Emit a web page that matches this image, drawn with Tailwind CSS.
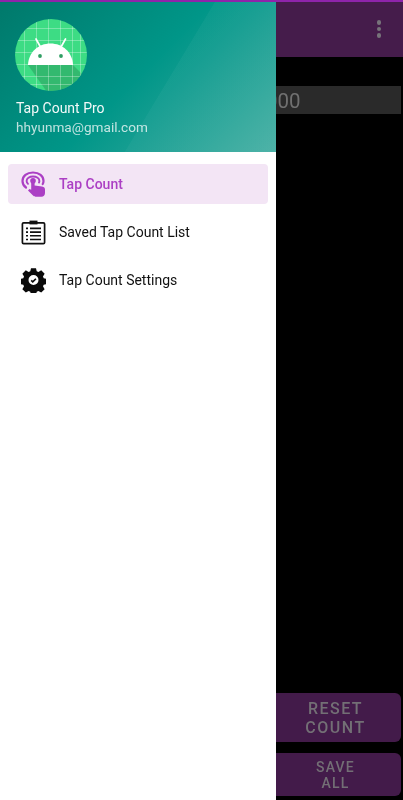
<!DOCTYPE html>
<html>
<head>
<meta charset="utf-8">
<script src="https://cdn.jsdelivr.net/npm/@tailwindcss/browser@4"></script>
</head>
<body class="m-0 bg-black">
<div class="relative w-[403px] h-[800px] overflow-hidden bg-black font-['Roboto',sans-serif] blur-[0.4px]">
  <!-- underlying screen -->
  <div class="flex flex-col h-full">
    <div class="h-[2px] bg-[#8e24aa] shrink-0"></div>
    <div class="h-[55px] shrink-0 bg-[#451c4b] flex items-center justify-end pr-[22px]">
      <div class="flex flex-col gap-[2px] mt-[-1px]">
        <span class="w-[4.5px] h-[4.5px] rounded-full bg-[#77737a]"></span>
        <span class="w-[4.5px] h-[4.5px] rounded-full bg-[#77737a]"></span>
        <span class="w-[4.5px] h-[4.5px] rounded-full bg-[#77737a]"></span>
      </div>
    </div>
    <div class="mt-[29px] ml-[266px] mr-[2px] h-[28px] pt-[2px] bg-[#2a2a2a] flex items-center justify-start shrink-0">
      <span class="text-[20.5px] leading-none text-[#707070]">000</span>
    </div>
    <div class="mt-auto mr-[2px] ml-[270px] flex flex-col gap-[11px] pb-[4px]">
      <div class="h-[49px] pt-[1px] rounded-[6px] bg-[#431b4a] flex items-center justify-center text-center text-[#736f75] text-[16px] leading-[19px] font-medium tracking-[1.5px]">RESET<br>COUNT</div>
      <div class="h-[43px] rounded-[6px] bg-[#431b4a] flex items-center justify-center text-center text-[#736f75] text-[14px] leading-[16px] font-medium tracking-[1.2px]">SAVE<br>ALL</div>
    </div>
  </div>

  <!-- navigation drawer -->
  <aside class="absolute left-0 top-0 bottom-0 w-[276px] bg-white flex flex-col">
    <div class="h-[2px] bg-[#8e24aa] shrink-0"></div>
    <header class="relative h-[150px] shrink-0 bg-[linear-gradient(135deg,#00796b_0%,#009688_50%,#48b0a5_100%)] px-[16px] overflow-hidden">
      <div class="absolute inset-0 bg-[linear-gradient(121deg,transparent_0%,transparent_58.6%,rgba(255,255,255,0.035)_58.8%,rgba(255,255,255,0.035)_100%)]"></div>
      <div class="relative">
        <svg class="mt-[17px] ml-[-1px] block" width="72" height="72" viewBox="0 0 72 72">
          <defs>
            <clipPath id="c"><circle cx="36" cy="36" r="36"/></clipPath>
          </defs>
          <circle cx="36" cy="36" r="36" fill="#3ddc84"/>
          <g clip-path="url(#c)">
            <path d="M13 46 H58 L88 76 V90 H44 Z" fill="#2c9c5e" fill-opacity="0.55"/>
            <g stroke="#ffffff" stroke-opacity="0.3" stroke-width="1">
              <path d="M9.5 0V72M21.5 0V72M33.5 0V72M45.5 0V72M57.5 0V72M65.5 0V72"/>
              <path d="M0 9.5H72M0 21.5H72M0 33.5H72M0 45.5H72M0 57.5H72M0 65.5H72"/>
            </g>
          </g>
          <path d="M13 46 C13.5 33 23.5 24.5 35.5 24.5 C47.5 24.5 57.5 33 58 46 Z" fill="#ffffff"/>
          <path d="M25.5 28 L21 20 M46 28 L50.5 20" stroke="#ffffff" stroke-width="1.7" stroke-linecap="round"/>
          <circle cx="25" cy="37" r="1.9" fill="#2f9e63"/>
          <circle cx="46" cy="37" r="1.9" fill="#2f9e63"/>
        </svg>
        <p class="mt-[7px] text-[14px] leading-[20px] text-white/95">Tap Count Pro</p>
        <p class="mt-[-1px] text-[13.6px] leading-[20px] text-white/75">hhyunma@gmail.com</p>
      </div>
    </header>
    <nav class="px-[8px] pt-[12px] flex flex-col gap-[8px]">
      <a class="h-[40px] rounded-[4px] bg-[#f3e5f5] flex items-center pl-[13px] gap-[13px] text-[14px] font-medium text-[#ab3fc4]">
        <svg width="25" height="26" viewBox="0 0 25 26" fill="none">
          <path d="M5 16.5 C2.6 14.8 1.5 12.6 1.5 10 C1.5 5 5.8 1.5 12 1.5 C18.2 1.5 22.5 5 22.5 10 C22.5 11.2 22.2 12.2 21.7 13" stroke="#ab3fc4" stroke-width="2.2" stroke-linecap="round"/>
          <path d="M7 12.8 C6 11.8 5.6 10.9 5.6 10 C5.6 7.4 8.4 5.5 12 5.5 C15.6 5.5 18.4 7.4 18.4 10 C18.4 10.6 18.3 11 18 11.5" stroke="#ab3fc4" stroke-width="1.9" stroke-linecap="round"/>
          <circle cx="12" cy="9.8" r="2.8" fill="#ab3fc4"/>
          <path d="M10.2 9.8 H13.6 V14.4 L21 15.4 C23.2 15.8 24 16.8 24 18.6 V22 C24 24.4 22.6 25.8 20.4 25.8 H14.6 C13.4 25.8 12.8 25.4 12 24.6 L7 19.4 L8.4 18 L10.2 18.8 Z" fill="#ab3fc4"/>
        </svg>
        <span>Tap Count</span>
      </a>
      <a class="h-[40px] flex items-center pl-[13px] gap-[13px] text-[14px] text-[#111]">
        <svg width="25" height="26" viewBox="0 0 25 26" fill="none">
          <rect x="1.4" y="3.8" width="22.2" height="20.8" rx="1.2" stroke="#111" stroke-width="1.7"/>
          <path d="M8.5 1.6 H16.5 V5.4 H8.5 Z" fill="#111"/>
          <path d="M5 9.4h2M9 9.4h11M5 13.1h2M9 13.1h11M5 16.8h2M9 16.8h11M5 20.5h2M9 20.5h11" stroke="#111" stroke-width="1.6"/>
        </svg>
        <span>Saved Tap Count List</span>
      </a>
      <a class="h-[40px] flex items-center pl-[13px] gap-[13px] text-[14px] text-[#111]">
        <svg width="25" height="26" viewBox="0 0 24 24">
          <path fill="#0a0a0a" fill-rule="evenodd" d="M9.6 0.6h4.8l0.7 3 1.6 0.7 2.7-1.6 3.3 3.3-1.6 2.7 0.7 1.6 3 0.7v4.8l-3 0.7-0.7 1.6 1.6 2.7-3.3 3.3-2.7-1.6-1.6 0.7-0.7 3h-4.8l-0.7-3-1.6-0.7-2.7 1.6-3.3-3.3 1.6-2.7-0.7-1.6-3-0.7v-4.8l3-0.7 0.7-1.6-1.6-2.7 3.3-3.3 2.7 1.6 1.6-0.7Z M12 7.2a4.8 4.8 0 1 0 0 9.6a4.8 4.8 0 1 0 0-9.6Z"/>
          <path d="M9.8 12.4l1.5 1.4 3-3" fill="none" stroke="#0a0a0a" stroke-width="1.6"/>
        </svg>
        <span>Tap Count Settings</span>
      </a>
    </nav>
  </aside>
</div>
</body>
</html>
